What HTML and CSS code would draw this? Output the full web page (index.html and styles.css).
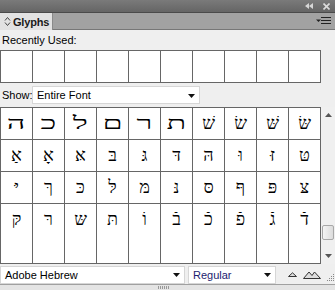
FILE: index.html
```html
<!DOCTYPE html>
<html>
  <head>
    <meta charset="UTF-8">
    <title>Glyphs</title>
    <link rel="stylesheet" href="styles.css">
  </head>
  <body>
    <div class="panel">
      <div class="titlebar">
        <svg class="tb-icon" width="8" height="6" viewBox="0 0 8 6"><path d="M4 0L0 3L4 6Z M8 0L4 3L8 6Z" fill="#d6d6d6"/></svg>
        <svg class="tb-icon" width="7" height="7" viewBox="0 0 7 7"><path d="M0.5 0.5L6.5 6.5M6.5 0.5L0.5 6.5" stroke="#dcdcdc" stroke-width="1.6"/></svg>
      </div>
      <div class="tabs">
        <div class="tab">
          <svg class="tab-icon" width="7" height="11" viewBox="0 0 7 11"><path d="M1 4.5L3.5 1.5L6 4.5M1 6.5L3.5 9.5L6 6.5" stroke="#444" fill="none" stroke-width="1"/></svg>
          <span>Glyphs</span>
        </div>
        <div class="tabfill">
          <svg width="15" height="8" viewBox="0 0 15 8"><path d="M0 2.5H5L2.5 5Z" fill="#222"/><path d="M5 0.5H15M5 3.5H15M5 6.5H15" stroke="#222" stroke-width="1"/></svg>
        </div>
      </div>

      <div class="body">
        <div class="label">Recently Used:</div>
        <div class="recent">
          <div class="rcell"></div><div class="rcell"></div><div class="rcell"></div><div class="rcell"></div><div class="rcell"></div>
          <div class="rcell"></div><div class="rcell"></div><div class="rcell"></div><div class="rcell"></div><div class="rcell"></div>
        </div>

        <div class="showrow">
          <span class="showlabel">Show:</span>
          <div class="select show-select">
            <span>Entire Font</span>
            <svg class="arrow" width="7" height="4" viewBox="0 0 7 4"><path d="M0 0H7L3.5 4Z" fill="#111"/></svg>
          </div>
        </div>

        <div class="glypharea">
          <div class="grid">
            <div class="cell"><span class="wide">ה</span></div>
            <div class="cell"><span class="wide">כ</span></div>
            <div class="cell"><span class="wide">ל</span></div>
            <div class="cell"><span class="wide">ם</span></div>
            <div class="cell"><span class="wide">ר</span></div>
            <div class="cell"><span class="wide">ת</span></div>
            <div class="cell">שׁ</div>
            <div class="cell">שׂ</div>
            <div class="cell">שּׁ</div>
            <div class="cell">שּׂ</div>

            <div class="cell">אַ</div>
            <div class="cell">אָ</div>
            <div class="cell">אּ</div>
            <div class="cell">בּ</div>
            <div class="cell">גּ</div>
            <div class="cell">דּ</div>
            <div class="cell">הּ</div>
            <div class="cell">וּ</div>
            <div class="cell">זּ</div>
            <div class="cell">טּ</div>

            <div class="cell">יּ</div>
            <div class="cell">ךּ</div>
            <div class="cell">כּ</div>
            <div class="cell">לּ</div>
            <div class="cell">מּ</div>
            <div class="cell">נּ</div>
            <div class="cell">סּ</div>
            <div class="cell">ףּ</div>
            <div class="cell">פּ</div>
            <div class="cell">צּ</div>

            <div class="cell last">קּ</div>
            <div class="cell last">רּ</div>
            <div class="cell last">שּ</div>
            <div class="cell last">תּ</div>
            <div class="cell last">וֹ</div>
            <div class="cell last">בֿ</div>
            <div class="cell last">כֿ</div>
            <div class="cell last">פֿ</div>
            <div class="cell last">גֿ</div>
            <div class="cell last">דֿ</div>
          </div>
          <div class="scrollbar">
            <svg class="sb-up" width="7" height="4" viewBox="0 0 7 4"><path d="M0 4H7L3.5 0Z" fill="#555"/></svg>
            <div class="thumb"></div>
            <svg class="sb-down" width="7" height="4" viewBox="0 0 7 4"><path d="M0 0H7L3.5 4Z" fill="#555"/></svg>
          </div>
        </div>

        <div class="footer">
          <div class="select font-select">
            <span>Adobe Hebrew</span>
            <svg class="arrow" width="7" height="4" viewBox="0 0 7 4"><path d="M0 0H7L3.5 4Z" fill="#111"/></svg>
          </div>
          <div class="select style-select">
            <span>Regular</span>
            <svg class="arrow" width="7" height="4" viewBox="0 0 7 4"><path d="M0 0H7L3.5 4Z" fill="#111"/></svg>
          </div>
          <svg class="zoom-small" width="9" height="5" viewBox="0 0 9 5"><path d="M0.5 4.5L4.5 0.8L8.5 4.5Z" fill="#ddd" stroke="#333" stroke-width="1"/></svg>
          <svg class="zoom-big" width="18" height="8" viewBox="0 0 18 8"><path d="M0.5 7.5L6 1L9 4.5L11.5 1L17.5 7.5Z" fill="#ddd" stroke="#333" stroke-width="1"/></svg>
          <svg class="grip" width="7" height="7" viewBox="0 0 7 7"><path d="M6 0h1v1h-1zM4 2h1v1h-1zM6 2h1v1h-1zM2 4h1v1h-1zM4 4h1v1h-1zM6 4h1v1h-1zM0 6h1v1h-1zM2 6h1v1h-1zM4 6h1v1h-1zM6 6h1v1h-1z" fill="#888"/></svg>
        </div>
      </div>

      <div class="strip">
        <svg width="11" height="3" viewBox="0 0 11 3"><path d="M0 0h1v3h-1zM2 0h1v3h-1zM4 0h1v3h-1zM6 0h1v3h-1zM8 0h1v3h-1zM10 0h1v3h-1z" fill="#999"/></svg>
      </div>
    </div>
  </body>
</html>
```

FILE: styles.css
```css
*
{
  box-sizing:border-box
}
body
{
  margin:0;
  width:335px;
  height:290px;
  overflow:hidden;
  font-family:"Liberation Sans", Arial, sans-serif;
  font-size:11px;
  color:#000;
  background:#efefef
}
.panel
{
  display:flex;
  flex-direction:column;
  height:290px
}
.titlebar
{
  height:13px;
  background:linear-gradient(#7a7a7a, #656565);
  border-bottom:1px solid #4a4a4a;
  display:flex;
  justify-content:flex-end;
  align-items:center;
  gap:10px;
  padding-right:5px
}
.tabs
{
  height:17px;
  display:flex;
  background:#a2a2a2;
  border-bottom:1px solid #777
}
.tab
{
  width:53px;
  height:17px;
  background:#e2e2e2;
  border-right:1px solid #8a8a8a;
  display:flex;
  align-items:center;
  gap:2px;
  padding-left:4px;
  font-size:11px;
  font-weight:bold;
  letter-spacing:-0.2px;
  color:#1a1a1a
}
.tab-icon
{
  flex-shrink:0
}
.tabfill
{
  flex:1;
  display:flex;
  justify-content:flex-end;
  align-items:center;
  padding-right:4px
}
.body
{
  flex:1;
  display:flex;
  flex-direction:column
}
.label
{
  height:20px;
  padding:4px 0 0 2px;
  line-height:13px
}
.recent
{
  display:grid;
  grid-template-columns:repeat(10, 32px);
  border-top:1px solid #666;
  border-left:1px solid #666;
  width:321px;
  height:33px
}
.rcell
{
  background:#fff;
  border-right:1px solid #666;
  border-bottom:1px solid #666
}
.showrow
{
  height:24px;
  display:flex;
  align-items:center;
  padding-left:2px
}
.showlabel
{
  width:30px
}
.select
{
  height:18px;
  background:#fff;
  border:1px solid #d6d6d6;
  display:flex;
  align-items:center;
  justify-content:space-between;
  padding:0 4px 0 4px
}
.show-select
{
  width:168px
}
.arrow
{
  margin-top:1px
}
.glypharea
{
  display:flex;
  height:157px
}
.grid
{
  display:grid;
  grid-template-columns:repeat(10, 32px);
  grid-template-rows:32px 32px 32px 60px;
  width:321px;
  border-top:1px solid #666;
  border-left:1px solid #666;
  background:#fff
}
.cell
{
  border-right:1px solid #666;
  border-bottom:1px solid #666;
  text-align:center;
  font-family:"Liberation Serif", "DejaVu Serif", serif;
  font-size:18px;
  line-height:31px;
  color:#000
}
.wide
{
  display:inline-block;
  transform:scaleX(1.8)
}
.scrollbar
{
  flex:1;
  position:relative;
  background:#f0f0f0
}
.sb-up
{
  position:absolute;
  left:4px;
  top:6px
}
.sb-down
{
  position:absolute;
  left:4px;
  top:147px
}
.thumb
{
  position:absolute;
  left:1px;
  top:118px;
  width:12px;
  height:15px;
  border:1px solid #a8a8a8;
  border-radius:2px;
  background:linear-gradient(to right, #f4f4f4, #dcdcdc)
}
.footer
{
  height:20px;
  display:flex;
  align-items:center;
  padding-top:1px
}
.font-select
{
  width:185px
}
.style-select
{
  width:88px;
  margin-left:3px;
  color:#1d1d70
}
.zoom-small
{
  margin-left:12px
}
.zoom-big
{
  margin-left:6px
}
.grip
{
  margin-left:6px;
  margin-top:6px
}
.strip
{
  height:6px;
  border-top:1px solid #a0a0a0;
  background:#e4e4e4;
  display:flex;
  justify-content:center;
  align-items:center;
  padding-right:8px
}
```
